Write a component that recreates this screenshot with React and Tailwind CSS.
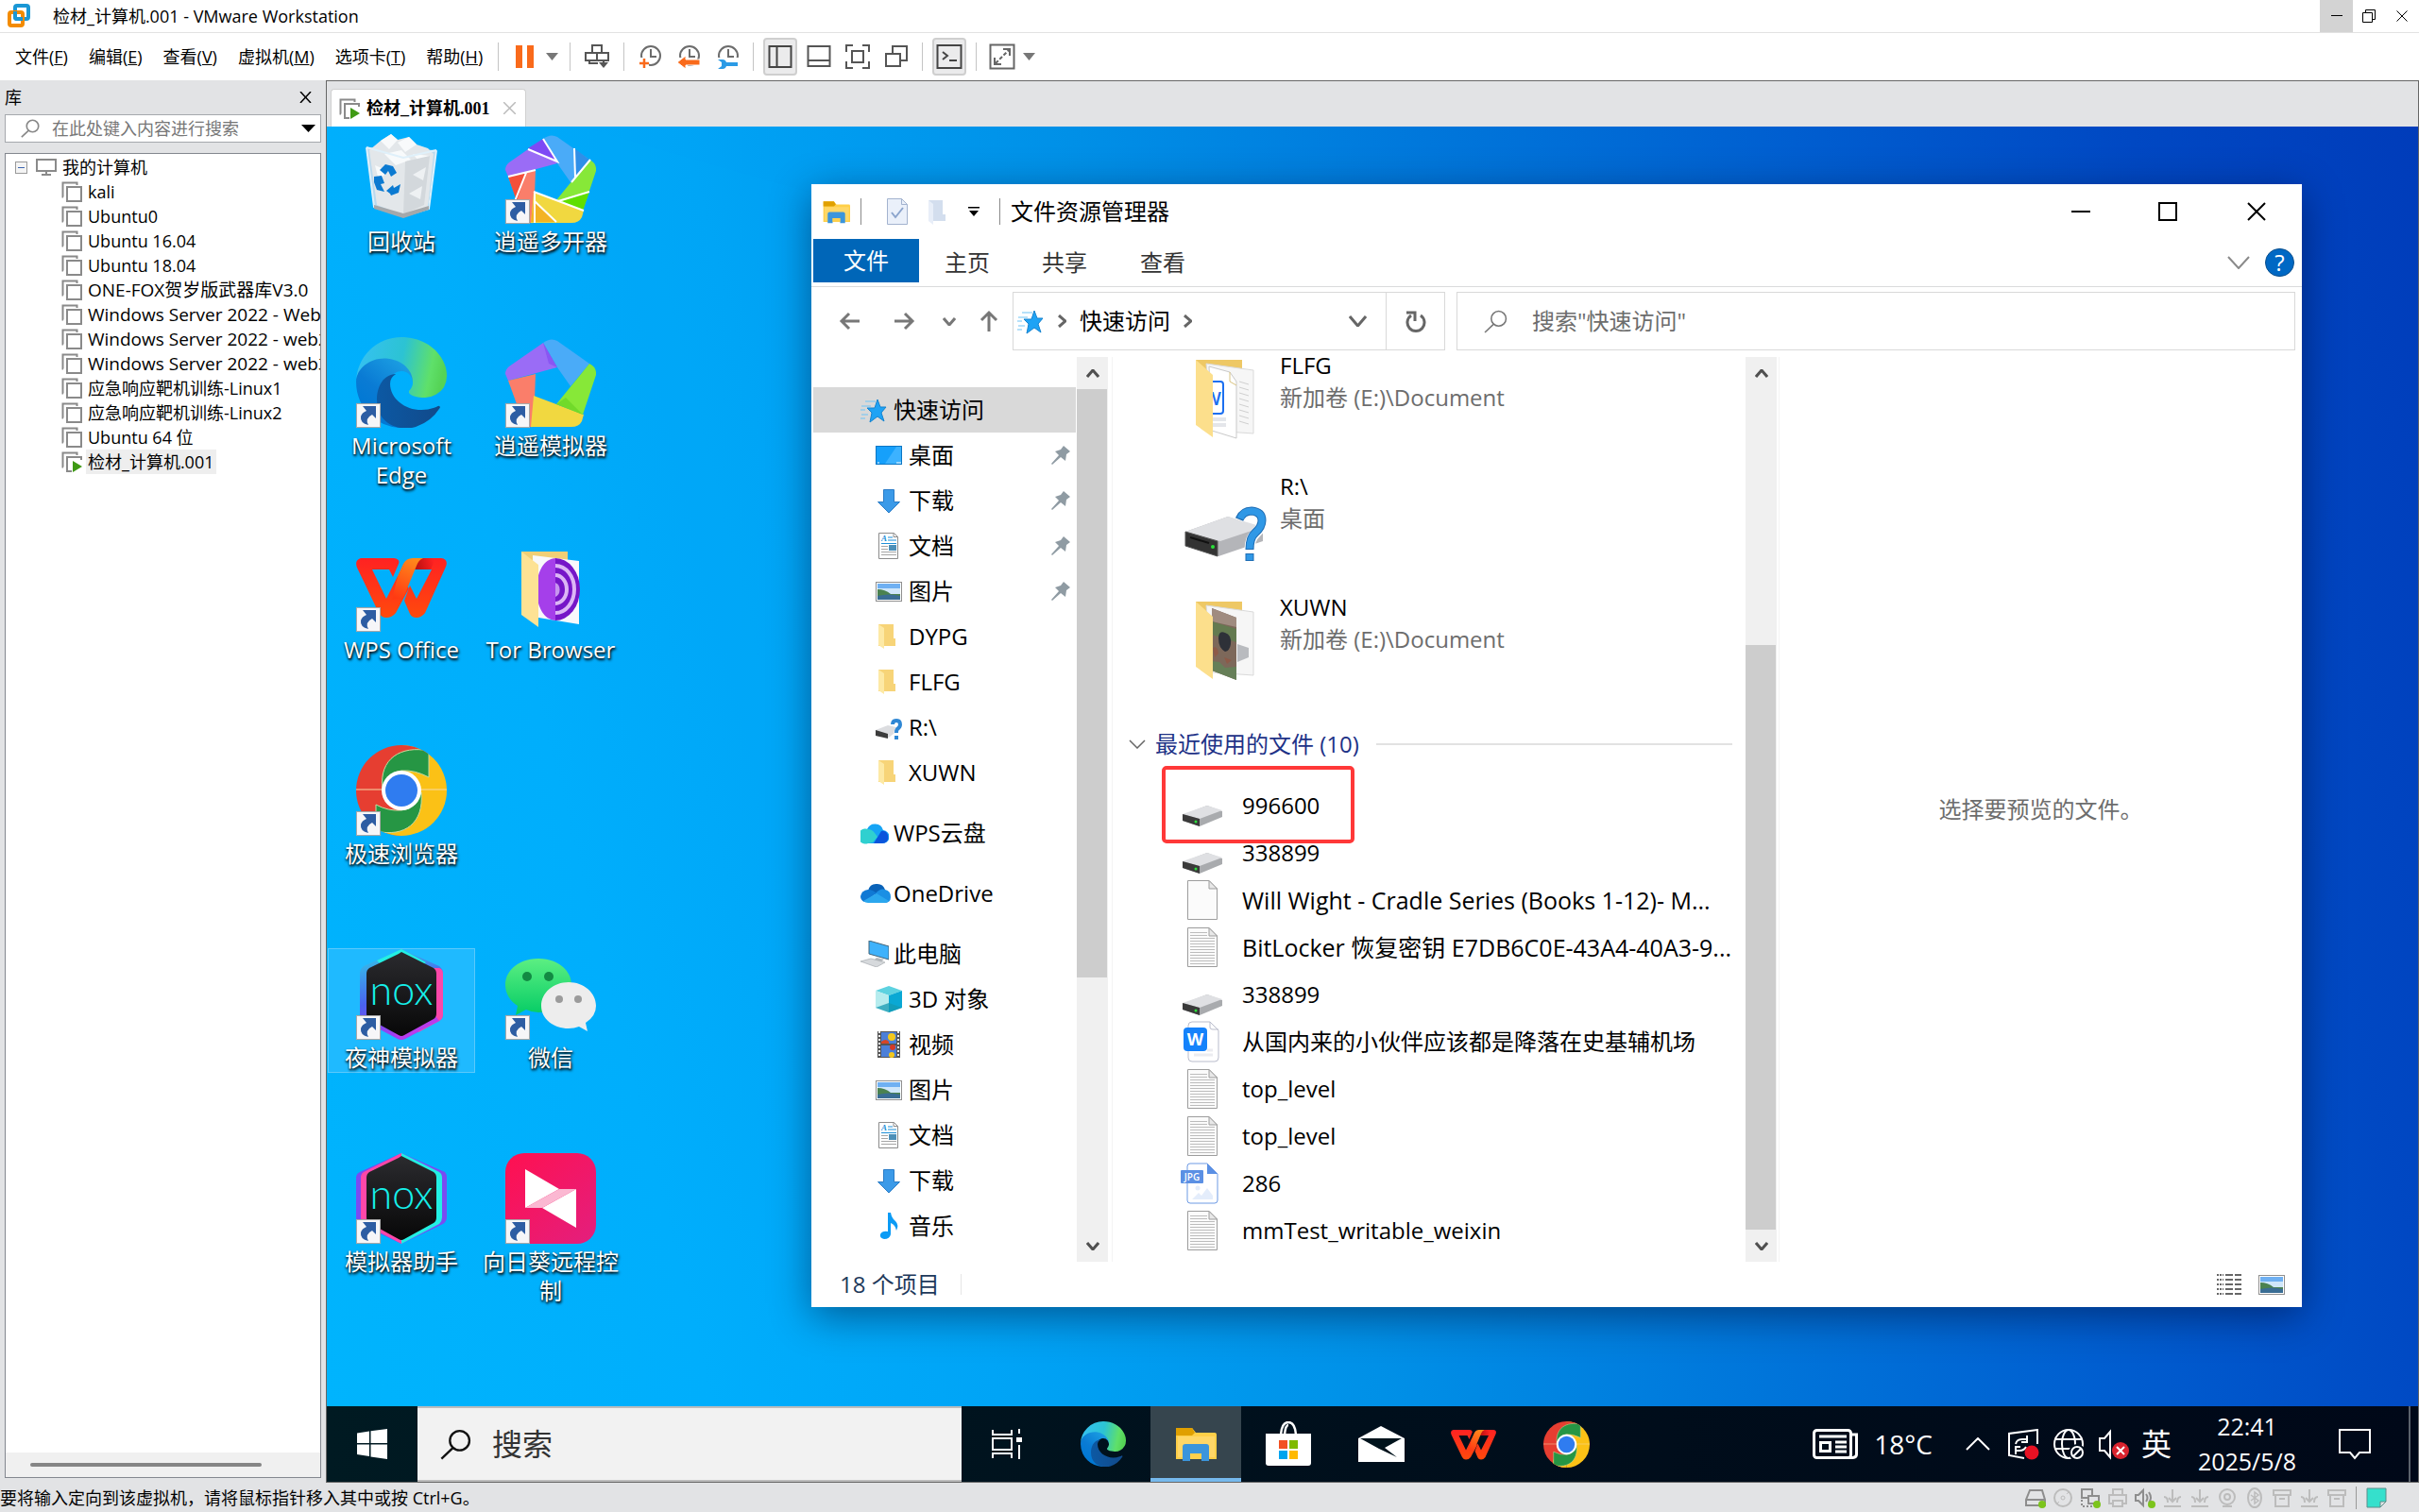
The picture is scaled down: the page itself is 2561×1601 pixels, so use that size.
import React from 'react';

/* ---------- shared helpers ---------- */

function Svg({ w, h, vb, children, className = '' }) {
  return (
    <svg width={w} height={h || w} viewBox={vb || `0 0 ${w} ${h || w}`} fill="none" aria-hidden="true" className={`shrink-0 ${className}`}>
      {children}
    </svg>
  );
}

function Chevron({ dir = 'down', w = 14, h = 8, color = '#808080', sw = 3 }) {
  const pts = {
    down: `M1 1 L${w / 2} ${h - 1} L${w - 1} 1`,
    up: `M1 ${h - 1} L${w / 2} 1 L${w - 1} ${h - 1}`,
    right: `M1 1 L${w - 1} ${h / 2} L1 ${h - 1}`,
  };
  return (
    <Svg w={w} h={h}>
      <path d={pts[dir]} stroke={color} strokeWidth={sw} />
    </Svg>
  );
}

function Triangle({ className = 'text-[#777]' }) {
  return (
    <Svg w={13} h={8} className={className}>
      <path d="M0 0h13L6.500 8z" fill="currentColor" />
    </Svg>
  );
}

/* ---------- host window icons ---------- */

const VmwareLogo = () => (
  <Svg w={26} h={26}>
    <rect x="9" y="2" width="14" height="14" rx="2" stroke="#1a97d5" strokeWidth="4" />
    <rect x="3" y="9" width="14" height="14" rx="2" stroke="#f38b00" strokeWidth="4" />
    <path d="M9 8v6q0 2 2 2h6" stroke="#1a97d5" strokeWidth="4" />
  </Svg>
);

const VmIcon = ({ running }) => (
  <Svg w={22} h={22}>
    <path d="M2 16.500H1.500V1.500H16.500V4" stroke="#8a8a8a" strokeWidth="2" />
    <rect x="6" y="6" width="15" height="15" stroke="#8a8a8a" strokeWidth="2" fill="#fff" />
    {running && <path d="M11 9h11v13H11z" fill="#fff" />}
    {running && <path d="M12 10l10 6-10 6z" fill="#3f9a14" />}
  </Svg>
);

const SendKeys = () => (
  <Svg w={26} h={26}>
    <rect x="8" y="1" width="10" height="9" stroke="#555" strokeWidth="2" />
    <path d="M1 9h24v8H1z" fill="#fff" stroke="#555" strokeWidth="2" />
    <path d="M13 9v8M5 17v3h9" stroke="#555" strokeWidth="2" />
    <path d="M20 17v4" stroke="#555" strokeWidth="2" />
    <path d="M15 19h10l-5 6z" fill="#555" />
  </Svg>
);

const Clock = ({ kind }) => (
  <Svg w={26} h={26}>
    <circle cx="14" cy="12" r="10" stroke="#6c6c6c" strokeWidth="2" />
    <path d="M14 5v8h6" stroke="#6c6c6c" strokeWidth="2" />
    {kind !== 'wrench' && <path d="M0 14h12v12H0z" fill="#fff" />}
    {kind === 'add' && <path d="M7 15v10M2 20h10" stroke="#f96a1b" strokeWidth="2.500" />}
    {kind === 'revert' && <path d="M1 19l9-7v4h15v6H10v4z" fill="#f96a1b" stroke="#fff" strokeWidth="1" />}
    {kind === 'wrench' && (
      <>
        <path d="M0 14h26v12H0z" fill="#fff" />
        <path d="M3 16h5q3 0 4 3h12v4H12q-1 3-4 3H3l4-3v-4z" fill="#2b9be6" />
      </>
    )}
  </Svg>
);

const ViewSide = () => (
  <Svg w={26} h={26}>
    <rect x="1.500" y="2" width="23" height="22" stroke="#444" strokeWidth="2" />
    <path d="M9.500 2v22" stroke="#444" strokeWidth="2" />
  </Svg>
);
const ViewBottom = () => (
  <Svg w={26} h={26}>
    <rect x="1.500" y="2" width="23" height="21" stroke="#555" strokeWidth="2" />
    <path d="M1.500 17h23" stroke="#555" strokeWidth="2" />
  </Svg>
);
const FullScreen = () => (
  <Svg w={28} h={28}>
    <path d="M2 9V2h7M19 2h7v7M26 19v7h-7M9 26H2v-7" stroke="#555" strokeWidth="2" />
    <rect x="8" y="8" width="12" height="12" stroke="#555" strokeWidth="2" />
  </Svg>
);
const Unity = () => (
  <Svg w={26} h={26}>
    <path d="M9 9V2h15v15h-7" stroke="#555" strokeWidth="2" />
    <rect x="2" y="10" width="15" height="13" stroke="#555" strokeWidth="2" />
  </Svg>
);
const Terminal = () => (
  <Svg w={28} h={28}>
    <rect x="1.500" y="2" width="25" height="24" stroke="#444" strokeWidth="2" />
    <path d="M7 9l5 4-5 4M14 18h8" stroke="#444" strokeWidth="2" />
  </Svg>
);
const Stretch = () => (
  <Svg w={28} h={28}>
    <rect x="1.500" y="1.500" width="25" height="25" stroke="#666" strokeWidth="2" />
    <path d="M15 6h7v7M6 15v7h7" stroke="#666" strokeWidth="2" />
    <path d="M7 21L21 7" stroke="#666" strokeWidth="2" strokeDasharray="4 2" />
  </Svg>
);

const Sep = () => <span className="h-[30px] w-px shrink-0 bg-[#c4c4c4]" />;

/* ---------- desktop icons ---------- */

const Edge = ({ size, id }) => (
  <Svg w={size} vb="0 0 256 256">
    <defs>
      <linearGradient id={`${id}a`} x1="60" y1="180" x2="240" y2="180" gradientUnits="userSpaceOnUse">
        <stop stopColor="#0c59a4" />
        <stop offset="1" stopColor="#114a8b" />
      </linearGradient>
      <linearGradient id={`${id}b`} x1="150" y1="90" x2="40" y2="220" gradientUnits="userSpaceOnUse">
        <stop stopColor="#1b9de2" />
        <stop offset=".6" stopColor="#0a7bd4" />
        <stop offset="1" stopColor="#0078d4" />
      </linearGradient>
      <linearGradient id={`${id}c`} x1="10" y1="60" x2="250" y2="110" gradientUnits="userSpaceOnUse">
        <stop stopColor="#35c1f1" />
        <stop offset=".5" stopColor="#2cc3d3" />
        <stop offset=".85" stopColor="#5fe06a" />
        <stop offset="1" stopColor="#55d355" />
      </linearGradient>
    </defs>
    <g transform="translate(-4.63 -4.92)">
      <path fill={`url(#${id}b)`} d="M110.340 246.340A79.200 79.200 0 0187.600 225a80.720 80.720 0 0129.530-120c3.120-1.470 8.450-4.130 15.540-4a32.350 32.350 0 0125.690 13 31.880 31.880 0 016.360 18.660c0-.21 24.460-79.600-80-79.600-43.900 0-80 41.660-80 78.210a130.150 130.150 0 0012.110 56 128 128 0 00156.380 67.110 75.550 75.550 0 01-62.780-8z" />
      <path fill={`url(#${id}a)`} d="M235.680 199.280a93.730 93.730 0 01-10.540 4.710 101.870 101.870 0 01-35.900 6.460c-47.320 0-88.540-32.550-88.540-74.320A31.480 31.480 0 01117.130 108.800c-42.800 1.800-53.800 46.400-53.800 72.530 0 73.880 68.090 81.370 82.760 81.370 7.910 0 19.840-2.300 27-4.560l1.310-.44a128.340 128.340 0 0066.600-52.800 4 4 0 00-5.320-5.620z" />
      <path fill={`url(#${id}c)`} d="M156.940 153.780c-.81 1.050-3.300 2.500-3.300 5.660 0 2.610 1.700 5.120 4.720 7.230 14.380 10 41.490 8.680 41.560 8.680a59.560 59.560 0 0030.270-8.350A61.380 61.380 0 00260.630 114c.26-22.410-8-37.310-11.340-43.910C228.090 28.760 182.350 4.920 132.630 4.920a128 128 0 00-128 126.200c.48-36.540 36.800-66 80-66 3.500 0 23.460.34 42 10.070 16.340 8.580 24.900 18.940 30.850 29.210 6.180 10.670 7.280 24.150 7.280 29.520s-2.740 13.330-7.820 19.860z" />
    </g>
  </Svg>
);

const Wps = ({ size, id }) => (
  <Svg w={size} vb="0 0 96 96">
    <defs>
      <linearGradient id={`${id}a`} x1="0" y1="18" x2="0" y2="81" gradientUnits="userSpaceOnUse">
        <stop stopColor="#ff2222" />
        <stop offset="1" stopColor="#ff4a0c" />
      </linearGradient>
      <linearGradient id={`${id}b`} x1="62" y1="18" x2="42" y2="60" gradientUnits="userSpaceOnUse">
        <stop stopColor="#ff8a1c" />
        <stop offset="1" stopColor="#ff3a12" />
      </linearGradient>
      <linearGradient id={`${id}c`} x1="62" y1="26" x2="82" y2="20" gradientUnits="userSpaceOnUse">
        <stop stopColor="#b80f0f" />
        <stop offset="1" stopColor="#ff2222" />
      </linearGradient>
    </defs>
    <path fill={`url(#${id}a)`} d="M66 18H90Q98 19 95 27L73 76Q69 81 64 81Q59 81 57 77L51 63L57 47L64 61L80 30H62z" />
    <path fill={`url(#${id}c)`} d="M64 18h20l-5 12H62z" />
    <path fill={`url(#${id}a)`} d="M5 18H40Q47 19 45 24L39 38L35 30H17L32 61L44 37L56 50L42 76Q38 81 32 81Q27 81 24 76L1 28Q-2 20 5 18z" />
    <path fill={`url(#${id}b)`} d="M44 37L50 24Q53 18 60 18H71Q66 20 64 26L50 60L38 62z" />
  </Svg>
);

const Chrome = ({ size, id }) => (
  <Svg w={size} vb="0 0 96 96">
    <defs>
      <clipPath id={id}>
        <circle cx="48" cy="48" r="48" />
      </clipPath>
    </defs>
    <g clipPath={`url(#${id})`}>
      <path d="M0 0h48v96H0z" fill="#e63e31" />
      <path d="M48 0h48v96H48z" fill="#fbc116" />
      <path d="M48 0h28v20H48z" fill="#e63e31" />
      <path d="M20 80h28v16H20z" fill="#fbc116" />
      <path d="M0 47h96" stroke="#f6d9a8" strokeWidth="1" />
      <path d="M28 46C24 14 48 0 77 6V34Q62 26 48 27T28 46z" fill="#269644" stroke="#c8dca0" strokeWidth="1" />
      <path d="M69 50C72 82 52 98 21 91V63Q34 70 48 69T69 50z" fill="#269644" stroke="#c8dca0" strokeWidth="1" />
      <circle cx="48" cy="48" r="21" fill="#fff" />
      <circle cx="48" cy="48" r="17" fill="#2f7cf0" />
    </g>
  </Svg>
);

const RecycleBin = () => (
  <Svg w={96}>
    <path d="M11 15L85 18L76 80L50 89L19 78z" fill="#b9d9ee" />
    <path d="M14 18L26 8L37 1L44 7L56 4L64 12L76 16L82 22L76 78L50 87L22 76z" fill="#e3e7ea" />
    <path d="M26 8l11-7 7 6-9 10zM56 4l8 8-12 8-8-10zM30 22l18-4 10 10-16 6zM60 22l18 2-8 10zM20 34l14 6-10 10z" fill="#f8fafb" />
    <path d="M52 30l26-6-6 52-22 10zM60 40l10 6-8 8z" fill="#d3d8dc" />
    <path d="M60 44l14-8-3 14zM56 64l14-8-2 14z" fill="#eef1f3" />
    <path d="M11 15L50 26L85 18M11 15L19 78L50 88L77 80L85 18" stroke="#dff0fa" strokeWidth="2" />
    <path d="M19 76l31 9 27-8v4l-27 9-31-10z" fill="#a4a8ab" />
    <g fill="#0b7ad1">
      <path d="M25 39l6-6 8 2 4 7-6 4-3-6-3 4z" />
      <path d="M19 46l8-1 3 8-4 1 4 8-8-2-3-8z" />
      <path d="M32 61l7-6 1 3 7-4-2 9-8 3-1-2z" />
    </g>
  </Svg>
);

const Pentagon = ({ split }) => (
  <Svg w={96}>
    <path d="M40 6Q48 0 55 4L89 28L69 52L55 32z" fill="#4aabf8" />
    <path d="M40 6L55 32L3 46L0 39Q0 34 4 31z" fill="#9a6cf6" />
    <path d="M3 46L32 39L30 95Q22 96 19 90z" fill="#fa7e6a" />
    <path d="M30 62L83 82L81 89Q78 95 70 95H27z" fill="#f1d840" />
    <path d="M89 28Q97 32 96 40L82 82L54 71z" fill="#87e838" />
    {!split && (
      <>
        <path d="M46 28L55 32L40 6z" fill="#7a3ff0" opacity=".5" />
        <path d="M54 71L82 82L64 64z" fill="#5ccc1c" opacity=".5" />
      </>
    )}
    {split && (
      <>
        <path d="M40 6L24 16L55 30z" fill="#7d4af5" />
        <path d="M73 16L89 28L74 46z" fill="#2f8fe8" />
        <path d="M89 62L82 82L60 72z" fill="#5fdf00" />
        <path d="M30 72L54 94H27z" fill="#f3b324" />
        <path d="M3 46L22 42L12 72z" fill="#f4503a" />
        <path d="M40 6L55 30L24 17M3 46L32 39M22 42L10 72M31 62V95M31 72L54 94M30 62L83 82M56 72L89 62M70 52L90 28M73 16L74 47" stroke="#fff" strokeWidth="2" />
      </>
    )}
  </Svg>
);

const TorFolder = () => (
  <Svg w={96}>
    <path d="M17 11H66V80H22z" fill="#f0cf76" />
    <path d="M29 15L78 21V88L29 80z" fill="#f8f8fb" />
    <path d="M54 18C26 18 26 84 54 84z" fill="#a53fea" />
    <path d="M53 18a26 33 0 010 66z" fill="#7616c8" />
    <path d="M53 26a20 25 0 010 50M53 36a12 15 0 010 30" stroke="#dcb6f5" strokeWidth="4" />
    <path d="M53 44a7 8 0 010 15z" fill="#c795ef" />
    <path d="M17 11L35 25V91L17 78z" fill="#fde294" />
  </Svg>
);

const Nox = ({ alt, id }) => (
  <Svg w={96}>
    <defs>
      <linearGradient id={`${id}a`} x1="48" y1="0" x2="48" y2="96" gradientUnits="userSpaceOnUse">
        <stop stopColor="#2c2c30" />
        <stop offset="1" stopColor="#060606" />
      </linearGradient>
      <linearGradient id={`${id}b`} x1="10" y1="10" x2="40" y2="96" gradientUnits="userSpaceOnUse">
        <stop stopColor="#35bde8" />
        <stop offset=".5" stopColor="#4a62f0" />
        <stop offset="1" stopColor="#a93af2" />
      </linearGradient>
    </defs>
    {alt ? (
      <>
        <path d="M48 0L94 20Q96 22 96 26V68Q96 72 92 75L48 96L4 75Q0 72 0 68V26Q0 22 4 20z" fill="#7a4bf2" />
        <path d="M48 0L88 20Q91 22 91 26V68Q91 72 88 75L48 96z" fill="#22f0e4" />
        <path d="M48 0L8 20Q5 22 5 26V68Q5 72 8 75L48 96z" fill="#ff47a8" />
      </>
    ) : (
      <>
        <path d="M48 0L88 18Q92 21 92 26V69Q92 74 88 76L52 95Q48 97 44 95L8 76Q4 74 4 69V26Q4 21 8 18z" fill={`url(#${id}b)`} />
        <path d="M48 0L74 14L66 20L48 8L26 16L22 12z" fill="#22f0e4" />
        <path d="M74 20H88Q92 21 92 26V69Q92 74 88 76L66 88V30z" fill="#fb47a8" />
        <path d="M48 96L88 76L80 66L40 90z" fill="#b93cec" />
      </>
    )}
    <path d="M48 3L82 20Q85 22 85 26V68Q85 72 82 74L51 91Q48 93 45 91L14 74Q11 72 11 68V26Q11 22 14 20L45 5z" fill={`url(#${id}a)`} />
    <text x="48" y="59" textAnchor="middle" fill="#16f0ea" fontFamily="Lato" fontWeight="300" fontSize="43">nox</text>
  </Svg>
);

const WeChat = ({ id }) => (
  <Svg w={96}>
    <defs>
      <linearGradient id={id} x1="0" y1="8" x2="0" y2="68" gradientUnits="userSpaceOnUse">
        <stop stopColor="#5ff083" />
        <stop offset="1" stopColor="#07cd66" />
      </linearGradient>
    </defs>
    <path d="M35 10C15 10 0 22 0 38C0 47 5 55 13 60L11 70L22 64Q28 67 35 67C55 67 70 54 70 38S55 10 35 10z" fill={`url(#${id})`} />
    <ellipse cx="23" cy="29" rx="5" ry="5" fill="#128a43" />
    <ellipse cx="46" cy="29" rx="5" ry="5" fill="#128a43" />
    <path d="M67 35C51 35 38 46 38 60S51 84 67 84Q73 84 78 82L87 87L85 78Q96 71 96 60C96 46 83 35 67 35z" fill="#ededed" />
    <circle cx="57" cy="53" r="4" fill="#9b9b9b" />
    <circle cx="77" cy="53" r="4" fill="#9b9b9b" />
  </Svg>
);

const Sunlogin = ({ id }) => (
  <Svg w={96}>
    <defs>
      <linearGradient id={id} x1="0" y1="0" x2="96" y2="96" gradientUnits="userSpaceOnUse">
        <stop stopColor="#ff1050" />
        <stop offset="1" stopColor="#e31f7e" />
      </linearGradient>
    </defs>
    <rect width="96" height="96" rx="20" fill={`url(#${id})`} />
    <path d="M21 17L57 38L21 58z" fill="#fff" />
    <path d="M75 38V79L39 58z" fill="#fff" />
    <path d="M57 38H75L39 58H21z" fill="#fbb8d2" />
  </Svg>
);

const ShortcutBadge = () => (
  <span className="absolute bottom-0 left-0 flex h-[26px] w-[26px] items-center justify-center border border-[#a8a8a8] bg-[#f6f6f8]">
    <Svg w={20} h={22}>
      <path d="M4 1h14v13l-4-4Q6 14 10 21Q1 19 2 12Q3 8 8 6z" fill="#2d5da3" />
    </Svg>
  </span>
);

const DESKTOP = [
  [
    { icon: <RecycleBin />, label: '回收站', plain: true },
    { icon: <Edge size={96} id="edgeD" />, label: 'Microsoft Edge' },
    { icon: <Wps size={96} id="wpsD" />, label: 'WPS Office' },
    { icon: <Chrome size={96} id="chrD" />, label: '极速浏览器' },
    { icon: <Nox id="noxA" />, label: '夜神模拟器', selected: true },
    { icon: <Nox alt id="noxB" />, label: '模拟器助手' },
  ],
  [
    { icon: <Pentagon split />, label: '逍遥多开器' },
    { icon: <Pentagon />, label: '逍遥模拟器' },
    { icon: <TorFolder />, label: 'Tor Browser', plain: true },
    null,
    { icon: <WeChat id="wcD" />, label: '微信' },
    { icon: <Sunlogin id="sunD" />, label: '向日葵远程控制' },
  ],
];

function DesktopIcon({ item }) {
  if (!item) return <div className="h-[216px]" />;
  return (
    <div className="h-[216px]">
      <button
        className={`flex w-full flex-col items-center border ${item.selected ? 'border-[#5cc9fb] bg-[#1fbaff]' : 'border-transparent'}`}
      >
        <span className="relative block">
          {item.icon}
          {!item.plain && <ShortcutBadge />}
        </span>
        <span className="mt-[3px] w-[150px] text-center text-[24px] leading-[31px] text-white [text-shadow:1px_2px_3px_#000,0_1px_2px_rgba(0,0,0,.7)]">
          {item.label}
        </span>
      </button>
    </div>
  );
}

/* ---------- explorer icons ---------- */

const Star = () => (
  <Svg w={28} h={28}>
    <path d="M18 3l3 8h6l-5 6 3 9-7-5-8 6 2-10-5-5h8z" fill="#1ea3f5" stroke="#1583cf" strokeWidth="1" />
    <path d="M5 5h11M1 10h10M0 14h5M1 19h7M0 23h5" stroke="#6fc3f5" strokeWidth="1" />
  </Svg>
);
const DesktopIc = () => (
  <Svg w={28} h={28}>
    <rect x=".5" y="4.500" width="27" height="19" fill="#16a0fb" stroke="#0b76c4" />
    <path d="M10 23L22 5h5v18z" fill="#3cb2ff" />
    <path d="M2 22h2M22 22h5" stroke="#fff" strokeWidth="1" />
  </Svg>
);
const DownloadIc = () => (
  <Svg w={28} h={28}>
    <path d="M8.500 2.500h11v13h6L14 27 2.500 15.500h6z" fill="#3b9ae8" stroke="#2a7cc7" />
  </Svg>
);
const DocIc = () => (
  <Svg w={28} h={28}>
    <path d="M3.500.5h16l4 4v23h-20z" fill="#fff" stroke="#8c8c8c" />
    <path d="M19 .5v4h4.500" stroke="#8c8c8c" />
    <text x="6" y="9" fontSize="9" fontStyle="italic" fontWeight="700" fontFamily="Liberation Serif" fill="#1d8fd8">A</text>
    <path d="M13 5h5M13 8h9M6 11.500h16" stroke="#1d8fd8" strokeWidth="1" />
    <path d="M6 14.500h7M6 17.500h7M6 20.500h16M6 23.500h16" stroke="#a5a5a5" />
    <path d="M14 13h8v6h-8z" fill="#4c8fb8" />
  </Svg>
);
const PicIc = () => (
  <Svg w={28} h={28}>
    <rect x=".5" y="4.500" width="27" height="20" fill="#fff" stroke="#8f8f8f" />
    <path d="M2 6h24v17H2z" fill="#6fb0f2" />
    <path d="M2 11h24v6H2z" fill="#cfe6fa" />
    <path d="M2 12q8 0 14 5h10v3H2z" fill="#4b8250" />
    <path d="M2 19q12-3 24 0v4H2z" fill="#3a6d94" />
  </Svg>
);
const FolderIc = () => (
  <Svg w={28} h={28}>
    <path d="M3 1h16v15h2v8H3z" fill="#f7d478" />
    <path d="M3 1l6 4v22l-6-4z" fill="#fde9a5" />
  </Svg>
);
const DriveQ = () => (
  <Svg w={28} h={28}>
    <path d="M0 17l13-5 13 3-12 10L0 23z" fill="#dcdde0" />
    <path d="M0 17l13 4v5L0 23z" fill="#3c3c3c" />
    <path d="M17 11q0-5 5-5t5 5q0 3-3 5-2 1-2 4" stroke="#fff" strokeWidth="5" />
    <path d="M18 11q0-4 4-4t4 4q0 3-3 5-1 1-1 4M22 23v4" stroke="#2f87d4" strokeWidth="4" />
  </Svg>
);
const CloudWps = () => (
  <Svg w={30} h={24}>
    <path d="M8 23a8 8 0 01-1-15A9 9 0 0124 9a7 7 0 01-1 14z" fill="#16a4f5" />
    <path d="M14 23L22 10q5-1 7 4 2 8-6 9z" fill="#0a55dc" />
    <path d="M8 23a8 8 0 110-15q4 0 7 4l3 4-5 6z" fill="#2fd0d0" />
  </Svg>
);
const OneDrive = () => (
  <Svg w={32} h={22}>
    <path d="M8 8q2-8 10-7 6 0 8 6l-6 7z" fill="#0a62b8" />
    <path d="M8 7q5 0 9 4L4 20q-4-2-4-6 1-6 8-7z" fill="#1079d4" />
    <path d="M16 11q5-6 10-4 6 1 6 8 0 6-7 6l-9-6z" fill="#1b8fe4" />
    <path d="M17 11l13 8q-2 2-5 2H8q-3 0-5-2z" fill="#2ba7ee" />
  </Svg>
);
const PcIc = () => (
  <Svg w={30} h={28}>
    <path d="M9 0l21 6v14L9 14z" fill="#3fb2fb" stroke="#456579" />
    <path d="M17 18l8 2-4 3-8-1z" fill="#b4b8bc" />
    <path d="M0 22l11-3 15 4-9 5z" fill="#d6d9dc" stroke="#a8acb0" strokeWidth=".7" />
  </Svg>
);
const CubeIc = () => (
  <Svg w={28} h={28}>
    <path d="M14 0l14 5-14 5L0 5z" fill="#5dd2e0" />
    <path d="M0 5l14 5v18L0 23z" fill="#b6ecee" />
    <path d="M28 5l-14 5v18l14-5z" fill="#0aa8d4" />
    <path d="M14 18l14 5-14 5-14-5z" fill="#149ab2" opacity=".75" />
  </Svg>
);
const VideoIc = () => (
  <Svg w={28} h={28}>
    <path d="M2 0h24v28H2z" fill="#555" />
    <path d="M6 1h16v12H6zM6 15h16v12H6z" fill="#4b7fd8" />
    <path d="M4 0v28M24 0v28" stroke="#eee" strokeWidth="2" strokeDasharray="2 2" />
    <circle cx="17" cy="6" r="4" fill="#f4c81c" />
    <path d="M6 11q5-4 8 0v2H6z" fill="#d64526" />
    <circle cx="18" cy="17" r="3" fill="#d63a26" />
    <circle cx="17" cy="25" r="3" fill="#f4c81c" />
  </Svg>
);
const MusicIc = () => (
  <Svg w={28} h={28}>
    <path d="M13 0h3q1 6 5 9 4 4 1 10-1-6-6-8v12q-1 5-7 5-5-1-4-5 2-4 8-3z" fill="#0b9bf5" />
  </Svg>
);
const PinIc = () => (
  <Svg w={20} h={20} className="ml-auto mr-[6px]">
    <path d="M13 0l7 6-4 3-1 7-5-4-9 8-1-1 8-9-4-4 6-2z" fill="#8f9ba3" />
  </Svg>
);

const NAV = [
  { icon: <Star />, label: '快速访问', level: 0, selected: true },
  { icon: <DesktopIc />, label: '桌面', level: 1, pin: true },
  { icon: <DownloadIc />, label: '下载', level: 1, pin: true },
  { icon: <DocIc />, label: '文档', level: 1, pin: true },
  { icon: <PicIc />, label: '图片', level: 1, pin: true },
  { icon: <FolderIc />, label: 'DYPG', level: 1 },
  { icon: <FolderIc />, label: 'FLFG', level: 1 },
  { icon: <DriveQ />, label: 'R:\\', level: 1 },
  { icon: <FolderIc />, label: 'XUWN', level: 1 },
  { icon: <CloudWps />, label: 'WPS云盘', level: 0, gap: true },
  { icon: <OneDrive />, label: 'OneDrive', level: 0, gap: true },
  { icon: <PcIc />, label: '此电脑', level: 0, gap: true },
  { icon: <CubeIc />, label: '3D 对象', level: 1 },
  { icon: <VideoIc />, label: '视频', level: 1 },
  { icon: <PicIc />, label: '图片', level: 1 },
  { icon: <DocIc />, label: '文档', level: 1 },
  { icon: <DownloadIc />, label: '下载', level: 1 },
  { icon: <MusicIc />, label: '音乐', level: 1 },
];

const FolderBig = ({ photo }) => (
  <Svg w={96}>
    <path d="M16 11h49v70l-40 4z" fill="#eec865" />
    <path d="M27 15L77 22V89L33 86z" fill="#f6f6f6" stroke="#dadada" />
    {photo ? (
      <>
        <path d="M60 56l12 4v10l-12 5z" fill="#b9bbbf" />
        <path d="M33 18L59 28V94L33 84z" fill="#7d685a" />
        <path d="M33 18L59 28V38L33 32z" fill="#a08c80" />
        <path d="M33 32L59 40V54L33 46z" fill="#647a50" />
        <path d="M33 74l8 1 6 6 12-1v14l-26-10z" fill="#667f58" />
        <path d="M40 50q0-9 7-6 7 2 6 12-1 7-6 8-7-4-7-14z" fill="#2e3138" />
        <path d="M34 60q5-3 6 6l-4 4zM46 70l8 3-5 4z" fill="#8d5a48" />
      </>
    ) : (
      <>
        <path d="M62 34l10 3M62 40l10 3M62 46l10 3M62 52l10 3M62 58l10 3M62 64l10 3M62 70l10 3M62 76l10 3" stroke="#d0d0d0" />
        <path d="M30 18L52 24L59 34V94L33 86z" fill="#fff" stroke="#c9c9c9" />
        <path d="M52 24v10l7 4" stroke="#d9c480" />
        <rect x="28" y="34" width="17" height="34" rx="3" stroke="#1c6ff0" strokeWidth="2" fill="#fff" />
        <text x="24" y="59" fontSize="20" fontWeight="600" fontFamily="Open Sans" fill="#1c6ff0">W</text>
        <path d="M33 74h15M33 80h15" stroke="#e4e6ea" strokeWidth="4" />
      </>
    )}
    <path d="M16 11L34 27V93L16 80z" fill="#fcdf8c" />
  </Svg>
);

const DriveBig = () => (
  <Svg w={96}>
    <path d="M5 65L50 49L87 62V75L40 91L5 80z" fill="#b4b5b9" />
    <path d="M5 65L50 49L87 60L42 75z" fill="#dfe0e3" />
    <path d="M5 65L39 75V91L5 80z" fill="#333" stroke="#555" />
    <path d="M10 71l20 6" stroke="#111" strokeWidth="2" />
    <circle cx="34" cy="81" r="2" fill="#2ae03a" />
    <path d="M61 52Q66 42 75 42Q87 43 87 53Q87 60 80 66Q73 72 73 84M73 88v9" stroke="#fff" strokeWidth="11" />
    <path d="M62 52Q66 43 75 43Q86 44 86 53Q86 60 79 66Q73 71 73 84M73 88v8" stroke="#1f6db4" strokeWidth="9" />
    <path d="M63 51Q66 43 75 43Q86 44 86 53Q86 60 79 66Q73 71 73 83M73 89v6" stroke="#3098e6" strokeWidth="7" />
  </Svg>
);

const DriveSm = () => (
  <Svg w={48}>
    <path d="M3 34L29 24L45 30V36L21 46L3 40z" fill="#a9abae" />
    <path d="M3 33L29 24L45 29L21 38z" fill="#dfe0e3" />
    <path d="M3 33L21 38V46L3 40z" fill="#3a3a3a" />
    <circle cx="17" cy="41" r="1.500" fill="#2ae03a" />
  </Svg>
);
const PageSm = ({ lines }) => (
  <Svg w={48}>
    <path d="M8.500 3.500H31L39.500 12V44.500H8.500z" fill="#fbfbfb" stroke="#9d9d9d" />
    <path d="M31 3.500V12h8.500z" fill="#e8e8e8" stroke="#9d9d9d" />
    {lines && <path d="M11 8.500h18M11 11.500h18M11 14.500h26M11 17.500h26M11 20.500h26M11 23.500h26M11 26.500h26M11 29.500h26M11 32.500h26M11 35.500h26M11 38.500h26M11 41.500h26" stroke="#bcbcbc" />}
  </Svg>
);
const WordSm = () => (
  <Svg w={48}>
    <path d="M9 7q0-4 4-4h19l9 9v29q0 4-4 4H13q-4 0-4-4z" fill="#fff" stroke="#b9bccb" />
    <path d="M32 3v6q0 2 3 2h6" stroke="#b9bccb" />
    <path d="M15 38h20M29 33h6" stroke="#ebecf0" strokeWidth="3" />
    <rect x="4" y="9" width="25" height="25" rx="4" fill="#1582fb" />
    <text x="16.500" y="28" textAnchor="middle" fontSize="18" fontWeight="700" fontFamily="Open Sans" fill="#fff">W</text>
  </Svg>
);
const JpgSm = () => (
  <Svg w={48}>
    <path d="M8 6q0-3 3-3h18l11 11v28q0 3-3 3H11q-3 0-3-3z" fill="#fff" stroke="#6d9ae4" />
    <path d="M29 3l11 11H29z" fill="#5b90e4" />
    <circle cx="19" cy="29" r="2.500" fill="#e4edfb" />
    <path d="M13 41l7-7 3 3 6-8 6 8v4z" fill="#e4edfb" />
    <rect x="1" y="10" width="24" height="14" rx="1" fill="#5b90e4" />
    <text x="13" y="21" textAnchor="middle" fontSize="10" fontWeight="600" fontFamily="Open Sans" fill="#fff">JPG</text>
  </Svg>
);

const FOLDERS = [
  { icon: <FolderBig />, name: 'FLFG', path: '新加卷 (E:)\\Document' },
  { icon: <DriveBig />, name: 'R:\\', path: '桌面' },
  { icon: <FolderBig photo />, name: 'XUWN', path: '新加卷 (E:)\\Document' },
];

const FILES = [
  { icon: <DriveSm />, name: '996600', marked: true },
  { icon: <DriveSm />, name: '338899' },
  { icon: <PageSm />, name: 'Will Wight - Cradle Series (Books 1-12)- M...', long: true },
  { icon: <PageSm lines />, name: 'BitLocker 恢复密钥 E7DB6C0E-43A4-40A3-9...', long: true },
  { icon: <DriveSm />, name: '338899' },
  { icon: <WordSm />, name: '从国内来的小伙伴应该都是降落在史基辅机场' },
  { icon: <PageSm lines />, name: 'top_level' },
  { icon: <PageSm lines />, name: 'top_level' },
  { icon: <JpgSm />, name: '286' },
  { icon: <PageSm lines />, name: 'mmTest_writable_weixin' },
];

const ExplorerFolder = ({ w, h }) => (
  <Svg w={w} h={h} vb="0 0 44 36">
    <path d="M1 1h17l4 5h20q2 0 2 2v26H1z" fill="#ffcf48" />
    <path d="M1 1h17l3 5-3 3H1z" fill="#e0a000" />
    <path d="M3 10h39v22H3z" fill="#ffd767" />
    <path d="M8 36V21q0-3 3-3h22q3 0 3 3v15h-8v-8H16v8z" fill="#3b95dc" />
    <path d="M16 28h12v6H16z" fill="#fdd04e" />
  </Svg>
);

function Scrollbar({ before, size }) {
  return (
    <div className="flex w-[33px] shrink-0 flex-col bg-[#f0f0f0]">
      <button aria-label="向上滚动" className="flex h-[34px] items-center justify-center">
        <Chevron dir="up" w={14} h={9} color="#505050" />
      </button>
      <div className="flex min-h-0 flex-1 flex-col">
        <div style={{ flexGrow: before }} />
        <div className="mr-px bg-[#cdcdcd]" style={{ flexGrow: size }} />
        <div style={{ flexGrow: 100 - before - size }} />
      </div>
      <button aria-label="向下滚动" className="flex h-[34px] items-center justify-center">
        <Chevron w={14} h={9} color="#505050" />
      </button>
    </div>
  );
}

const Magnifier = ({ s, color, sw }) => (
  <Svg w={s} vb="0 0 24 24">
    <circle cx="15" cy="9" r="7.500" stroke={color} strokeWidth={sw} />
    <path d="M10 14.500L1 23" stroke={color} strokeWidth={sw} />
  </Svg>
);

function Explorer() {
  return (
    <section className="absolute bottom-[105px] left-[513px] right-[123px] top-[61px] flex flex-col bg-white text-[24px] text-black shadow-[0_10px_40px_rgba(0,0,30,.45)]">
      <header className="flex h-[58px] shrink-0 items-center pl-3">
        <ExplorerFolder w={29} h={25} />
        <span className="ml-[11px] h-7 w-px bg-[#8a8a8a]" />
        <button aria-label="属性" className="ml-[27px]">
          <Svg w={22} h={28}>
            <path d="M.5.5h15l6 6v21H.5z" fill="#eaf0fa" stroke="#a3b3cf" />
            <path d="M15.500.5v6h6" stroke="#a3b3cf" />
            <path d="M5 15l4 5 8-10" stroke="#8ba4cc" strokeWidth="2" />
          </Svg>
        </button>
        <button aria-label="新建文件夹" className="ml-[22px]">
          <Svg w={18} h={28}>
            <path d="M0 2h15v15h3v7H0z" fill="#d3deee" />
            <path d="M0 2l5 4v22l-5-4z" fill="#e8eef8" />
          </Svg>
        </button>
        <button aria-label="自定义快速访问工具栏" className="ml-6">
          <Svg w={12} h={10}>
            <path d="M0 0h12v1.500H0zM1 4h10L6 10z" fill="#000" />
          </Svg>
        </button>
        <span className="ml-[21px] h-7 w-px bg-[#8a8a8a]" />
        <h1 className="ml-[11px] leading-8">文件资源管理器</h1>
        <div className="ml-auto flex self-stretch">
          <button aria-label="最小化" className="flex w-[93px] items-center justify-center">
            <Svg w={20} h={20}><path d="M0 10h20" stroke="#000" strokeWidth="2" /></Svg>
          </button>
          <button aria-label="最大化" className="flex w-[91px] items-center justify-center">
            <Svg w={20} h={20}><path d="M1 1h18v18H1z" stroke="#000" strokeWidth="2" /></Svg>
          </button>
          <button aria-label="关闭" className="flex w-[97px] items-center justify-center">
            <Svg w={20} h={20}><path d="M1 1l18 18M19 1L1 19" stroke="#000" strokeWidth="2" /></Svg>
          </button>
        </div>
      </header>

      <nav className="flex h-[51px] shrink-0 border-b border-[#dadbdc] pl-[2px] text-[#333]">
        <button className="h-[46px] w-28 bg-[#0066b8] leading-8 text-white">文件</button>
        <button className="w-[102px] leading-8">主页</button>
        <button className="w-[104px] leading-8">共享</button>
        <button className="w-[104px] leading-8">查看</button>
        <div className="ml-auto flex items-center gap-4 pr-2">
          <button aria-label="展开功能区"><Chevron w={24} h={14} color="#8a8a8a" sw={2} /></button>
          <button aria-label="帮助" className="flex h-[30px] w-[31px] items-center justify-center rounded-full border border-[#0a4f8c] bg-[#0068c4] text-[24px] leading-6 text-white">?</button>
        </div>
      </nav>

      <div className="mb-[7px] mt-[5px] flex h-[62px] shrink-0 items-stretch pr-[7px]">
        <div className="flex w-[213px] items-center pl-[29px]">
          <button aria-label="后退">
            <Svg w={23} h={20}><path d="M22 10H3M11 2L3 10l8 8" stroke="#777" strokeWidth="3" /></Svg>
          </button>
          <button aria-label="前进" className="ml-[35px]">
            <Svg w={23} h={20}><path d="M1 10h19M12 2l8 8-8 8" stroke="#777" strokeWidth="3" /></Svg>
          </button>
          <button aria-label="最近的位置" className="ml-[29px]"><Chevron w={14} h={9} color="#777" /></button>
          <button aria-label="向上" className="ml-[25px]">
            <Svg w={20} h={24}><path d="M10 23V3M2 11l8-8 8 8" stroke="#777" strokeWidth="3" /></Svg>
          </button>
        </div>
        <div className="flex w-[458px] items-center border border-[#d9d9d9] pl-1">
          <Star />
          <span className="ml-[15px]"><Chevron dir="right" w={9} h={14} color="#666" /></span>
          <button className="ml-[14px] leading-8">快速访问</button>
          <span className="ml-[14px]"><Chevron dir="right" w={9} h={14} color="#666" /></span>
          <button aria-label="以前的位置" className="ml-auto mr-5"><Chevron w={19} h={12} color="#666" /></button>
          <button aria-label="刷新" className="flex w-[62px] items-center justify-center self-stretch border-l border-[#d9d9d9]">
            <Svg w={22} h={24}>
              <path d="M16 6a9 9 0 11-10 0" stroke="#666" strokeWidth="3" />
              <path d="M1 3h9v9" stroke="#666" strokeWidth="3" />
            </Svg>
          </button>
        </div>
        <label className="ml-3 flex min-w-0 flex-1 items-center border border-[#d9d9d9] pl-7">
          <Magnifier s={25} color="#777" sw={1.5} />
          <input aria-label="搜索快速访问" placeholder={'搜索"快速访问"'} className="ml-[26px] min-w-0 flex-1 bg-transparent leading-8 outline-none placeholder:text-[#6d6d6d]" />
        </label>
      </div>

      <div className="flex min-h-0 flex-1">
        <ul className="w-[280px] shrink-0 overflow-hidden pl-[2px] pt-8">
          {NAV.map((n, i) => (
            <li key={i} className={n.gap ? 'pt-4' : ''}>
              <button className={`flex h-12 w-full items-center ${n.level ? 'pl-[66px]' : 'pl-[50px]'} ${n.selected ? 'bg-[#d9d9d9]' : ''}`}>
                <span className="flex w-[35px] shrink-0">{n.icon}</span>
                <span className="whitespace-nowrap leading-8">{n.label}</span>
                {n.pin && <PinIc />}
              </button>
            </li>
          ))}
        </ul>
        <div className="ml-px flex"><Scrollbar before={0} size={70} /></div>

        <div className="ml-1 w-[671px] shrink-0 overflow-hidden border-l border-[#f3f3f3]">
          <ul className="-mt-2">
            {FOLDERS.map((f) => (
              <li key={f.name} className="flex h-32 gap-[9px] pl-[72px]">
                {f.icon}
                <div className="leading-[34px]">
                  <p>{f.name}</p>
                  <p className="text-[#6d6d6d]">{f.path}</p>
                </div>
              </li>
            ))}
          </ul>
          <div className="mt-[17px] flex h-[34px] items-center pl-[17px] pr-[14px] text-[#1e3287]">
            <Chevron w={18} h={10} color="#666" sw={1.5} />
            <h2 className="ml-[10px] whitespace-nowrap leading-8">最近使用的文件 (10)</h2>
            <span className="ml-[18px] h-[2px] flex-1 bg-[#e2e2e2]" />
          </div>
          <ul className="mt-[23px]">
            {FILES.map((f, i) => (
              <li key={i} className="relative flex h-[50px] items-center gap-[18px] pl-[71px]">
                {f.icon}
                <span className={`whitespace-nowrap leading-8 ${f.long ? 'text-[25px]' : ''}`}>{f.name}</span>
                {f.marked && <span className="absolute -top-[17px] left-[52px] z-10 h-[82px] w-[204px] rounded-[5px] border-4 border-[#ff3838]" />}
              </li>
            ))}
          </ul>
        </div>
        <Scrollbar before={30.500} size={69.500} />
        <div className="ml-[2px] flex flex-1 items-center justify-center border-l border-[#f3f3f3] text-[#6d6d6d]">
          <p className="leading-8">选择要预览的文件。</p>
        </div>
      </div>

      <footer className="flex h-12 shrink-0 items-center pl-[30px] pr-[18px] text-[#1e395b]">
        <span className="leading-8">18 个项目</span>
        <span className="ml-[22px] h-[22px] w-px bg-[#e6e6e6]" />
        <button aria-label="详细信息" className="ml-auto">
          <Svg w={28} h={24}>
            <path d="M1 2h7M1 7h7M1 12h7M1 17h7M1 22h7" stroke="#666" strokeWidth="2" strokeDasharray="2 1" />
            <path d="M10 2h8M10 7h8M10 12h8M10 17h8M10 22h8M20 2h7M20 7h7M20 12h7M20 17h7M20 22h7" stroke="#666" strokeWidth="2" />
          </Svg>
        </button>
        <button aria-label="大图标" className="ml-[17px]"><PicIc /></button>
      </footer>
    </section>
  );
}

/* ---------- taskbar ---------- */

const Store = () => (
  <Svg w={48} h={48}>
    <path d="M16 14Q17 1 24 1T32 14M20 14Q21 4 24 4" stroke="#fff" strokeWidth="2.500" />
    <path d="M0 13h48v31q0 3-3 3H3q-3 0-3-3z" fill="#fff" />
    <path d="M14 20h9v9h-9z" fill="#f25022" />
    <path d="M25 20h9v9h-9z" fill="#7fba00" />
    <path d="M14 31h9v9h-9z" fill="#00a4ef" />
    <path d="M25 31h9v9h-9z" fill="#ffb900" />
  </Svg>
);
const Mail = () => (
  <Svg w={49} h={40}>
    <path d="M0 14L24 1l25 13v25H0z" fill="#fff" />
    <path d="M2 14h44L28 24l13 10L22 25z" fill="#00131c" />
  </Svg>
);
const TaskView = () => (
  <Svg w={33} h={32}>
    <path d="M1 1v5h20V1M1 31v-5h20v5M29 0v5M29 17v15" stroke="#fff" strokeWidth="2" />
    <rect x="1" y="10" width="20" height="12" stroke="#fff" strokeWidth="2" />
    <path d="M26 9h6v5h-6z" fill="#fff" />
  </Svg>
);

const PINNED = [
  { icon: <Edge size={48} id="edgeT" />, label: 'Microsoft Edge' },
  { icon: <ExplorerFolder w={44} h={36} />, label: '文件资源管理器', active: true },
  { icon: <Store />, label: 'Microsoft Store' },
  { icon: <Mail />, label: '邮件' },
  { icon: <Wps size={48} id="wpsT" />, label: 'WPS' },
  { icon: <Chrome size={49} id="chrT" />, label: '极速浏览器' },
];

function TrayButton({ label, children }) {
  return (
    <button aria-label={label} className="flex h-full w-12 items-center justify-center">{children}</button>
  );
}

function Taskbar() {
  return (
    <div className="flex h-20 shrink-0 items-stretch bg-gradient-to-r from-[#001a22] via-[#000f1c] to-[#000818] text-white">
      <button aria-label="开始" className="flex w-24 items-center justify-center">
        <Svg w={32} h={32}>
          <path d="M0 4.500l13-2V15H0zM14.500 2.300L32 0v15H14.500zM0 16.500h13V29L0 27zM14.500 16.500H32V32l-17.500-2.500z" fill="#fff" />
        </Svg>
      </button>
      <label className="flex w-[576px] items-center border-y-2 border-[#bdbdbd] bg-[#f2f2f2] pl-6">
        <Magnifier s={33} color="#111" sw={1.7} />
        <input aria-label="搜索" placeholder="搜索" className="ml-[22px] min-w-0 flex-1 bg-transparent text-[32px] leading-10 outline-none placeholder:text-[#333]" />
      </label>
      <button aria-label="任务视图" className="flex w-24 items-center justify-center"><TaskView /></button>
      <div className="ml-[6px] flex gap-[2px]">
        {PINNED.map((p) => (
          <button key={p.label} aria-label={p.label} className={`flex w-24 items-center justify-center border-b-4 pt-1 ${p.active ? 'border-[#76b9ed] bg-[#36454e]' : 'border-transparent'}`}>
            {p.icon}
          </button>
        ))}
      </div>
      <div className="ml-auto flex items-center">
        <button className="flex items-center gap-[17px] pr-6 text-[28px] leading-8">
          <Svg w={48} h={32}>
            <rect x="1.500" y="1.500" width="39" height="29" rx="3" stroke="#fff" strokeWidth="3" />
            <path d="M42 6h4.500v21q0 3-4 3.500H38" stroke="#fff" strokeWidth="3" />
            <path d="M7 8h29M24 14h12M24 19h12M24 24h12" stroke="#fff" strokeWidth="3" />
            <rect x="8.500" y="14.500" width="10" height="9" stroke="#fff" strokeWidth="3" />
          </Svg>
          18°C
        </button>
        <TrayButton label="显示隐藏的图标"><Chevron dir="up" w={26} h={14} color="#fff" sw={2} /></TrayButton>
        <TrayButton label="更新">
          <Svg w={34} h={33}>
            <path d="M18 31L2 28V5L32 1v15" stroke="#fff" strokeWidth="2" />
            <path d="M9 16q1-5 7-5h4M21 7v7h-6M20 19q-2 4-7 4H9M9 27v-8h5" stroke="#fff" strokeWidth="2" />
            <circle cx="26" cy="25" r="7.500" fill="#e81123" />
          </Svg>
        </TrayButton>
        <TrayButton label="网络">
          <Svg w={33} h={33}>
            <circle cx="16" cy="16" r="15" stroke="#fff" strokeWidth="2" />
            <ellipse cx="16" cy="16" rx="7" ry="15" stroke="#fff" strokeWidth="2" />
            <path d="M2 11h28M2 21h28" stroke="#fff" strokeWidth="2" />
            <circle cx="25" cy="25" r="9" fill="#000c1a" />
            <circle cx="25" cy="25" r="6" stroke="#fff" strokeWidth="2" />
            <path d="M21 29l8-8" stroke="#fff" strokeWidth="2" />
          </Svg>
        </TrayButton>
        <TrayButton label="音量">
          <Svg w={34} h={33}>
            <path d="M2 10h5l6-7v27l-6-7H2z" stroke="#fff" strokeWidth="2" />
            <circle cx="24" cy="23" r="9" fill="#d9232e" />
            <path d="M20 19l8 8M28 19l-8 8" stroke="#fff" strokeWidth="2" />
          </Svg>
        </TrayButton>
        <button className="w-[42px] text-[32px] leading-10">英</button>
        <button className="flex w-[150px] flex-col items-center text-[25px] leading-[37px]">
          <span>22:41</span>
          <span>2025/5/8</span>
        </button>
        <button aria-label="通知" className="flex w-[78px] justify-center">
          <Svg w={34} h={33}><path d="M1 1h32v24h-11l-5 6-5-6H1z" stroke="#fff" strokeWidth="2" /></Svg>
        </button>
        <button aria-label="显示桌面" className="ml-[18px] h-20 w-[10px] border-l-2 border-[#5b626c]" />
      </div>
    </div>
  );
}

/* ---------- host chrome ---------- */

const MENUS = [
  ['文件', 'F'],
  ['编辑', 'E'],
  ['查看', 'V'],
  ['虚拟机', 'M'],
  ['选项卡', 'T'],
  ['帮助', 'H'],
];

const MACHINES = [
  { name: 'kali' },
  { name: 'Ubuntu0' },
  { name: 'Ubuntu 16.04' },
  { name: 'Ubuntu 18.04' },
  { name: 'ONE-FOX贺岁版武器库V3.0', long: true },
  { name: 'Windows Server 2022 - Web1', long: true },
  { name: 'Windows Server 2022 - web2', long: true },
  { name: 'Windows Server 2022 - web3', long: true },
  { name: '应急响应靶机训练-Linux1' },
  { name: '应急响应靶机训练-Linux2' },
  { name: 'Ubuntu 64 位' },
  { name: '检材_计算机.001', running: true },
];

function Library() {
  return (
    <aside className="flex w-[345px] shrink-0 flex-col px-[5px] pb-[5px]">
      <div className="flex h-9 shrink-0 items-center justify-between pr-[10px] text-[18px]">
        <h2 className="leading-6">库</h2>
        <button aria-label="关闭库">
          <Svg w={13} h={12}><path d="M1 0l11 12M12 0L1 12" stroke="#000" strokeWidth="1.500" /></Svg>
        </button>
      </div>
      <label className="flex h-[30px] shrink-0 items-center border border-[#a5a8ad] bg-white pl-4 pr-[5px]">
        <Magnifier s={20} color="#888" sw={2} />
        <input aria-label="搜索虚拟机" placeholder="在此处键入内容进行搜索" className="ml-[13px] min-w-0 flex-1 bg-transparent text-[18px] leading-6 outline-none placeholder:text-[#777]" />
        <button aria-label="搜索选项"><Svg w={15} h={8}><path d="M0 0h15L7.500 8z" fill="#000" /></Svg></button>
      </label>
      <div className="mt-[11px] flex min-h-0 flex-1 flex-col overflow-hidden border border-[#83878f] bg-white pt-px text-[18px]">
        <button className="flex h-[26px] items-center pl-[10px]">
          <Svg w={13} h={13}>
            <rect x=".5" y=".5" width="12" height="12" fill="#f4f4f4" stroke="#9a9a9a" />
            <path d="M3 6.500h7" stroke="#3d64b0" />
          </Svg>
          <Svg w={22} h={18} className="ml-[9px]">
            <rect x="1" y="1" width="20" height="12" stroke="#8a8a8a" strokeWidth="2" />
            <path d="M11 13v3M6 17h10" stroke="#8a8a8a" strokeWidth="2" />
          </Svg>
          <span className="ml-[6px] leading-6">我的计算机</span>
        </button>
        <ul className="flex-1">
          {MACHINES.map((m) => (
            <li key={m.name}>
              <button className="flex h-[26px] items-center pl-[59px]">
                <VmIcon running={m.running} />
                <span className={`ml-1 whitespace-nowrap px-[2px] leading-[26px] ${m.running ? 'bg-[#eee]' : ''} ${m.long ? 'text-[19px]' : ''}`}>{m.name}</span>
              </button>
            </li>
          ))}
        </ul>
        <div className="flex h-[26px] shrink-0 items-center bg-[#f0f0f0] pl-[26px] pr-[62px]">
          <div className="h-[4px] flex-1 rounded bg-[#858585]" />
        </div>
      </div>
    </aside>
  );
}

const ST = '#8d8d8d';
const DIM = '#bcbcbc';
const Dot = () => <circle cx="18" cy="18" r="4" fill="#7cc41c" />;
const UsbIc = () => (
  <Svg w={22} h={22}>
    <path d="M2 20h18M11 2v12M7 11l4 4 4-4M2 10q4 0 4 6M20 10q-4 0-4 6" stroke={DIM} strokeWidth="2" />
  </Svg>
);
const BoxIc = () => (
  <Svg w={22} h={22}>
    <path d="M2 3h18v5H2zM4 8v12h14V8M8 12h6" stroke={DIM} strokeWidth="2" />
  </Svg>
);
const DEVICES = [
  ['硬盘', <Svg w={22} h={22}><path d="M5 3h13l3 10v6H1v-6zM1 13h20" stroke={ST} strokeWidth="2" /><Dot /></Svg>],
  ['光盘', <Svg w={22} h={22}><circle cx="11" cy="11" r="9" stroke={DIM} strokeWidth="2" /><circle cx="11" cy="11" r="2" stroke={DIM} /><path d="M15 7l2-2M7 15l-2 2" stroke={DIM} /></Svg>],
  ['网络适配器', <Svg w={22} h={22}><path d="M2 2h11v9H2z" stroke={ST} strokeWidth="2" /><path d="M9 9h11v8H9z" fill="#e2e3e5" stroke={ST} strokeWidth="2" /><path d="M2 13v7h11" stroke={ST} strokeWidth="2" strokeDasharray="2 2" /><Dot /></Svg>],
  ['打印机', <Svg w={22} h={22}><path d="M6 8V2h10v6M6 17H2V8h18v9h-4M6 14h10v6H6z" stroke={DIM} strokeWidth="2" /></Svg>],
  ['声卡', <Svg w={22} h={22}><path d="M1 8h3l5-5v16l-5-5H1zM12 7q3 4 0 8M15 5q4 6 0 11" stroke={ST} strokeWidth="2" /><Dot /></Svg>],
  ['USB 设备 1', <UsbIc />],
  ['USB 设备 2', <UsbIc />],
  ['摄像头', <Svg w={22} h={22}><circle cx="11" cy="10" r="8" stroke={DIM} strokeWidth="2" /><circle cx="11" cy="10" r="3" stroke={DIM} strokeWidth="2" /><path d="M6 20h10" stroke={DIM} strokeWidth="2" /></Svg>],
  ['蓝牙', <Svg w={22} h={22}><ellipse cx="11" cy="11" rx="7" ry="10" stroke={DIM} strokeWidth="2" /><path d="M7 8l8 6-4 3V5l4 3-8 6" stroke={DIM} strokeWidth="1.500" /></Svg>],
  ['存储 1', <BoxIc />],
  ['USB 设备 3', <UsbIc />],
  ['存储 2', <BoxIc />],
];

export default function App() {
  return (
    <div className="flex h-screen flex-col overflow-hidden bg-[#e2e3e5] font-['Open_Sans','Noto_Sans_CJK_SC',sans-serif] text-black">
      <header className="flex h-[35px] shrink-0 items-center border-b border-[#e2e2e2] bg-white pl-[7px] text-[18px]">
        <VmwareLogo />
        <span className="ml-[23px] leading-6">检材_计算机.001 - VMware Workstation</span>
        <div className="ml-auto flex self-stretch pr-px">
          <button aria-label="最小化" className="flex w-[35px] items-center justify-center bg-[#d3d3d3]">
            <Svg w={12} h={12}><path d="M0 5.500h12" stroke="#000" /></Svg>
          </button>
          <button aria-label="还原" className="flex w-[34px] items-center justify-center">
            <Svg w={14} h={14}>
              <path d="M3.500 3.500v-3h10v10h-3" stroke="#000" />
              <path d="M.5 3.500h10v10H.5z" stroke="#000" />
            </Svg>
          </button>
          <button aria-label="关闭" className="flex w-[35px] items-center justify-center">
            <Svg w={12} h={12}><path d="M.5.5l11 11M11.500.5l-11 11" stroke="#000" /></Svg>
          </button>
        </div>
      </header>

      <nav className="flex h-[50px] shrink-0 items-center bg-white pl-4 text-[18px]">
        <div className="flex gap-[22px]">
          {MENUS.map(([t, k]) => (
            <button key={k} className="whitespace-nowrap leading-6">{t}(<u>{k}</u>)</button>
          ))}
        </div>
        <div className="ml-4 flex flex-1 items-center">
          <Sep />
          <button aria-label="挂起" className="ml-[18px]">
            <Svg w={20} h={24}><path d="M0 0h7v24H0zM12 0h7v24h-7z" fill="#f96a1b" /></Svg>
          </button>
          <button aria-label="电源选项" className="mx-3"><Triangle /></button>
          <Sep />
          <button aria-label="发送 Ctrl+Alt+Del" className="mx-[15px]"><SendKeys /></button>
          <Sep />
          <div className="mx-[14px] flex gap-[15px]">
            <button aria-label="拍摄快照"><Clock kind="add" /></button>
            <button aria-label="恢复快照"><Clock kind="revert" /></button>
            <button aria-label="管理快照"><Clock kind="wrench" /></button>
          </div>
          <Sep />
          <button aria-label="显示库" className="ml-[10px] flex h-10 w-9 items-center justify-center rounded border-2 border-[#cfcfcf] bg-[#ebebec]"><ViewSide /></button>
          <button aria-label="缩略图栏" className="ml-[10px]"><ViewBottom /></button>
          <button aria-label="全屏" className="ml-[14px]"><FullScreen /></button>
          <button aria-label="Unity 模式" className="mx-[14px]"><Unity /></button>
          <Sep />
          <button aria-label="控制台视图" className="mx-[10px] flex h-10 w-9 items-center justify-center rounded border-2 border-[#cfcfcf] bg-[#ebebec]"><Terminal /></button>
          <Sep />
          <button aria-label="拉伸客户机" className="ml-[13px]"><Stretch /></button>
          <button aria-label="拉伸选项" className="ml-2"><Triangle /></button>
        </div>
      </nav>

      <main className="flex min-h-0 flex-1">
        <Library />
        <section className="flex min-w-0 flex-1 flex-col border border-[#666]">
          <div className="flex h-12 shrink-0 items-end pl-1">
            <button className="flex h-10 items-center gap-1 rounded-t border border-b-0 border-[#d0d0d0] bg-white pl-2 pr-[10px] text-[18px] font-bold">
              <VmIcon running />
              <span className="ml-[3px] font-['Liberation_Serif','Noto_Sans_CJK_SC',sans-serif] leading-6">检材_计算机.001</span>
              <Svg w={13} h={13} className="ml-[10px]"><path d="M0 0l13 13M13 0L0 13" stroke="#bbb" strokeWidth="1.500" /></Svg>
            </button>
          </div>

          <div className="relative min-h-0 flex-1 overflow-hidden bg-[linear-gradient(76deg,#00b4fd_0%,#00aefc_16%,#00a4f6_28%,#0090e7_44%,#0075da_60%,#005ed0_74%,#0048c3_88%,#003cba_100%)]">
            <svg className="absolute inset-0 h-full w-full" viewBox="0 0 2213 1355" preserveAspectRatio="none" aria-hidden="true">
              <path d="M0 0H270L2000 500L0 975z" fill="#00b4ff" opacity=".08" />
            </svg>
            <div className="relative flex w-[316px] gap-[2px] pl-px pt-[6px]">
              {DESKTOP.map((col, i) => (
                <div key={i} className="w-[156px] shrink-0">
                  {col.map((item, j) => <DesktopIcon key={j} item={item} />)}
                </div>
              ))}
            </div>
            <Explorer />
          </div>

          <Taskbar />
        </section>
      </main>

      <footer className="flex h-[31px] shrink-0 items-center pr-[34px] text-[18px]">
        <p className="whitespace-nowrap leading-6">要将输入定向到该虚拟机，请将鼠标指针移入其中或按 Ctrl+G。</p>
        <div className="ml-auto flex items-center">
          {DEVICES.map(([label, icon]) => (
            <button key={label} aria-label={label} className="flex w-[29px] justify-center">{icon}</button>
          ))}
          <span className="ml-[6px] h-6 w-px bg-[#999]" />
          <button aria-label="消息日志" className="ml-[10px]">
            <Svg w={22} h={22}>
              <path d="M1 1h20v14l-6 6H1z" fill="#35e0cc" stroke="#5b8f8a" />
              <path d="M21 15h-6v6z" fill="#e2e3e5" stroke="#5b8f8a" />
            </Svg>
          </button>
        </div>
      </footer>
    </div>
  );
}
